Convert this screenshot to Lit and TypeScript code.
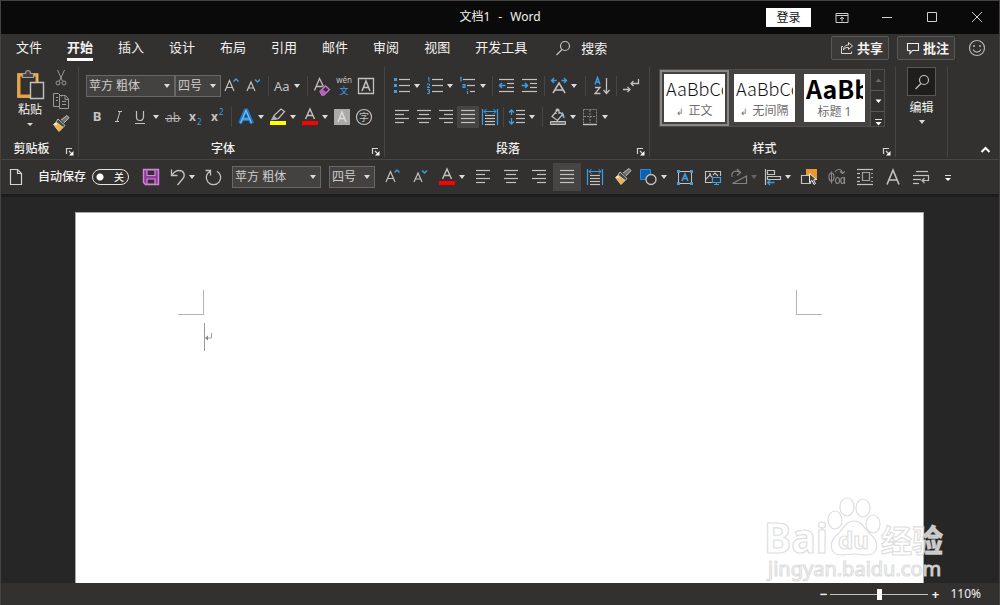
import { LitElement, html, css, svg, nothing, TemplateResult } from "lit";
import { customElement, property } from "lit/decorators.js";
import { classMap } from "lit/directives/class-map.js";

const GREY = "#c4c2c0";
const BLUE = "#3b9fe6";

const rows = (ys: number[], xs: number[][]) =>
  ys.map((y, i) => svg`<path d="M${xs[i % xs.length][0]} ${y + 0.5}H${xs[i % xs.length][1]}" stroke="${GREY}" stroke-width="1.2"/>`);

const brush = svg`
  <path d="M10 6l6-4.5 2 2.2-5 5.2" fill="#77736e" stroke="${GREY}"/>
  <path d="M7 5l7 6.5-2 2L5 8z" fill="#4a4845" stroke="${GREY}"/>
  <path d="M5 8.5L2.5 10.500L8 17.500l4-4z" fill="#f1b24e" stroke="#e9c88d"/>
  <path d="M5 8.500L2.500 10.500l4 .8z" fill="#fff2d8"/>`;
const distribute = svg`
  <path d="M2.500 2v16M17.500 2v16M4 4.500h12" stroke="${BLUE}" stroke-width="1.2"/>
  <path d="M6.500 2L4 4.500 6.500 7M13.500 2L16 4.500 13.500 7" stroke="${BLUE}" fill="none"/>
  ${rows([8, 11, 14, 17], [[5, 15]])}`;
const letterA = (d: string, w = 1.2) => svg`<path d="${d}" fill="none" stroke="${GREY}" stroke-width="${w}"/>`;

/* Glyphs are drawn on a 20 × 20 grid */
const icons: Record<string, TemplateResult | unknown> = {
  cut: svg`<path d="M6.500 2l5 11M13.500 2l-5 11" stroke="#9b9997" fill="none"/><circle cx="7" cy="15" r="2" fill="none" stroke="#9b9997"/><circle cx="13" cy="15" r="2" fill="none" stroke="#9b9997"/>`,
  copy: svg`<path d="M8 15.500H2.500v-13h5l3 3M8.500 4.500h6l3 3.500v9.500h-9zM14 5v3.500h3.500M11 10.500h4M11 13.500h4M5 6.500h2M5 9.500h2" fill="none" stroke="#9b9997"/>`,
  brush,
  grow: svg`${letterA("M3 15L7.500 4.500 12 15M4.500 11.500h6")}<path d="M11.500 5.500l2.500-2.500L16.500 5.500" fill="none" stroke="${BLUE}" stroke-width="1.400"/>`,
  shrink: svg`${letterA("M3 15L7 6 11 15M4.500 12h5")}<path d="M11 3.500l2.500 2.500 2.500-2.500" fill="none" stroke="${BLUE}" stroke-width="1.400"/>`,
  clear: svg`${letterA("M2.500 14.500L7.500 2.500l4 8M4.500 10.500h6", 1.3)}<path d="M8 15.500l5.500-5.500 4 3.500-5.500 5.500H10z" fill="#323130" stroke="#cf78d6" stroke-width="1.300"/><path d="M10.500 13l4 3.500-2.500 2.500h-2L8 15.500z" fill="#b65fc0"/>`,
  phonetic: svg`<text x="10" y="7" font-size="8" text-anchor="middle" fill="${GREY}">wén</text><text x="10" y="18" font-size="9" text-anchor="middle" fill="${BLUE}">文</text>`,
  boxed: svg`<path d="M2.500 2.500h15v15h-15z" fill="none" stroke="${GREY}" stroke-width="1.300"/>${letterA("M6 15L10 5l4 10M7.500 11.500h5", 1.5)}`,
  bold: svg`<text x="10" y="14" font-size="13" font-weight="700" text-anchor="middle" fill="${GREY}">B</text>`,
  italic: svg`<path d="M9 4.500h4M6 14.500h4M11 4.500l-3 10" stroke="${GREY}" fill="none"/>`,
  underline: svg`<path d="M5.500 4v6a3.500 3.500 0 0 0 7 0V4M4 16.500h10" stroke="${GREY}" fill="none" stroke-width="1.200"/>`,
  strike: svg`<text x="10" y="15" font-size="12" text-anchor="middle" fill="#b0aeac">ab</text><path d="M2 11.500h16" stroke="${GREY}"/>`,
  sub: svg`<text x="4" y="14" font-size="12" font-weight="700" fill="${GREY}">x</text><text x="12" y="18" font-size="8" fill="${BLUE}">2</text>`,
  sup: svg`<text x="4" y="14" font-size="12" font-weight="700" fill="${GREY}">x</text><text x="12" y="8" font-size="8" fill="${BLUE}">2</text>`,
  effects: svg`<path d="M4 16.500L9.500 3.500h1L16 16.500M6 12h8" fill="none" stroke="#1f78c8" stroke-width="4"/><path d="M4.500 16L10 3.500 15.500 16M6.500 12h7" fill="none" stroke="#74c0f5" stroke-width="1.200"/>`,
  highlight: svg`<path d="M4 12.500l2-4L13 2l3.500 2.500-6 7-4 1z" fill="none" stroke="${GREY}" stroke-width="1.200"/><path d="M3 13.500l3-5 4 3.500z" fill="#aaa8a6"/><path d="M2 14h16v4H2z" fill="#ffff00"/>`,
  color: svg`${letterA("M5.500 12L10 2l4.500 10M7 8.500h6", 1.4)}<path d="M2 14h16v4H2z" fill="#ff0000"/>`,
  shading: svg`<path d="M2 2h16v16H2z" fill="#acaaa8"/><path d="M6 15L10 5l4 10M7.500 11.500h5" fill="none" stroke="#dedcda" stroke-width="1.400"/>`,
  enclose: svg`<circle cx="10" cy="10" r="7.500" fill="none" stroke="${GREY}" stroke-width="1.200"/><text x="10" y="14" font-size="10" text-anchor="middle" fill="${GREY}">字</text>`,
  bullets: svg`<path d="M2 2h3v3H2zM2 8h3v3H2zM2 14h3v3H2z" fill="${BLUE}"/>${rows([3, 9, 15], [[7, 18]])}`,
  numbers: svg`<path d="M3 2l1-.5v4M2 8h2.500v1.500L2 11.500h3M2 13.500h2.500v4H2M3 15.500h1.500" fill="none" stroke="${BLUE}"/>${rows([3, 9, 15], [[7, 18]])}`,
  multilevel: svg`<path d="M2 2l1-.5v4M4.500 8.500h2.500v3H5v-1.500h2M9.500 13v1M9.500 15v3" fill="none" stroke="${BLUE}" stroke-width="1.200"/>${rows([3, 9, 15], [[5, 17], [9, 17], [12, 17]])}`,
  outdent: svg`${rows([3, 7, 11, 15], [[2, 17], [10, 17], [10, 17], [2, 17]])}<path d="M2.500 9.500h6M5 7L2.500 9.500 5 12" fill="none" stroke="${BLUE}" stroke-width="1.500"/>`,
  indent: svg`${rows([3, 7, 11, 15], [[2, 17], [10, 17], [10, 17], [2, 17]])}<path d="M1.500 9.500h6M5 7l2.500 2.500L5 12" fill="none" stroke="${BLUE}" stroke-width="1.500"/>`,
  layout: svg`${letterA("M4 17L10 7l6 10M6 14h8", 1.5)}<path d="M2.500 4.500h5M5 2L2.500 4.500 5 7M12.500 4.500h5M15 2l2.500 2.500L15 7" fill="none" stroke="${BLUE}" stroke-width="1.300"/>`,
  sort: svg`<path d="M3 8.500l2.500-7 2.500 7M4 6h3.500" fill="none" stroke="${BLUE}" stroke-width="1.400"/><path d="M3 11.500h5l-5 6h5.500M14.500 2v15M11.500 14l3 3.500 3-3.500" fill="none" stroke="${GREY}" stroke-width="1.300"/>`,
  marks: svg`<path d="M17.500 3v4.500H10M12.500 5L10 7.500l2.500 2.500M2 13.500h7M6.500 11L9 13.500 6.500 16" fill="none" stroke="${GREY}" stroke-width="1.300"/>`,
  left: rows([3, 7, 11, 15], [[3, 17], [3, 12]]),
  center: rows([3, 7, 11, 15], [[3, 17], [5, 15]]),
  right: rows([3, 7, 11, 15], [[3, 17], [8, 17]]),
  justify: rows([3, 7, 11, 15], [[3, 17]]),
  distribute,
  spacing: svg`<path d="M4.500 3v5M2 5.500L4.500 3 7 5.500M4.500 11v6M2 14.500L4.500 17 7 14.500" fill="none" stroke="${BLUE}" stroke-width="1.300"/>${rows([3, 7, 11, 15], [[9, 18]])}`,
  bucket: svg`<path d="M4 9.500L9.500 3l5 4.500-5 6zM8 7V3.500c0-2 3-2 3 0V7" fill="none" stroke="${GREY}" stroke-width="1.200"/><path d="M14 5c2 1 2.500 4 2.500 6.500-2-.5-2-3-3-4z" fill="#7cc0f0"/><path d="M2.500 14.500h15v3h-15z" fill="#777573" stroke="${GREY}"/>`,
  borders: svg`<path d="M3.500 2.500h13v14M3.500 2.500v14M10 3v13M4 9.500h12" fill="none" stroke="#8a8886" stroke-dasharray="2 1"/><path d="M3 17.500h14" stroke="${GREY}" stroke-width="1.400"/>`,
  search: svg`<circle cx="12" cy="8" r="4.500" fill="none" stroke="${GREY}" stroke-width="1.200"/><path d="M9 11.500L3.500 17" stroke="${GREY}" stroke-width="1.200"/>`,
  file: svg`<path d="M4.500 2.500h7l4 4v11h-11zM11.500 2.500v4h4" fill="none" stroke="#d6d4d2" stroke-width="1.200"/>`,
  save: svg`<path d="M2.500 2.500h15v15h-13l-2-2z" fill="#8e3b9c" stroke="#d583df" stroke-width="1.400"/><path d="M6 3h8v5.500H6zM6 12h8v5H6z" fill="#323130" stroke="#d583df" stroke-width="1.200"/>`,
  undo: svg`<path d="M4.500 2.500v6h6M5 8c2-3 4-4.500 7-4.500 5 0 6.500 5 4 8L10.500 18" fill="none" stroke="${GREY}" stroke-width="1.300"/>`,
  redo: svg`<path d="M7 4.200A7.200 7.200 0 1 0 14 4.200M2.500 3.500H7.500V8.500" fill="none" stroke="${GREY}" stroke-width="1.300"/>`,
  shapes: svg`<path d="M1.500 2.500h10v10h-10z" fill="#0d61b0" stroke="#2b87d8"/><circle cx="12" cy="12.500" r="5" fill="#323130" stroke="${GREY}" stroke-width="1.300"/>`,
  textbox: svg`<path d="M3.500 4.500h13v12h-13z" fill="none" stroke="${GREY}"/><path d="M2 3h3v3H2zM15 3h3v3h-3zM2 15h3v3H2zM15 15h3v3h-3z" fill="${BLUE}"/><path d="M7 14l3-7 3 7M8 11.500h4" fill="none" stroke="${BLUE}" stroke-width="1.600"/>`,
  picture: svg`<path d="M9 15.500H2.500v-11h15V9M3 12l4-4 3 3M10 8l2-2 3 3" fill="none" stroke="${GREY}" stroke-width="1.100"/><circle cx="7" cy="7" r="1" fill="${GREY}"/><path d="M9.500 10.500h8v5h-8zM13.500 16v2M11 17.500h5" fill="#323130" stroke="${BLUE}" stroke-width="1.200"/>`,
  rotate: svg`<path d="M3.500 16.500h14V9zM3 10c-1-6 4-7 8-4.500M8 2l3.500 3.500L8 8.500" fill="none" stroke="#858381" stroke-width="1.200"/>`,
  alignobj: svg`<path d="M2.500 2v16M4.500 3.500h7v4h-7zM4.500 9.500h13v3h-13z" fill="none" stroke="${GREY}" stroke-width="1.200"/><path d="M4.500 15.500h7M7 13l-2.500 2.500L7 18" fill="none" stroke="${BLUE}" stroke-width="1.300"/>`,
  select: svg`<path d="M7 2h11v11H7z" fill="#e9982d"/><path d="M2.500 8.500h9v8h-9z" fill="#323130" stroke="${GREY}" stroke-width="1.200"/><path d="M10.500 6.500v9l2.500-2 2 4 1.500-1-2-3.500 3-.5z" fill="#45423f" stroke="#eee"/>`,
  convert: svg`<g fill="none" stroke="#8d8b89" stroke-width="1.100"><ellipse cx="4.500" cy="10" rx="2.500" ry="4"/><path d="M4.500 4.500v12M8 5c2.500-4 7-3 7.500 1.500M13 4.500l2.500 2L18 4.500M17.500 10v7"/><ellipse cx="10.500" cy="13.500" rx="2" ry="3"/><ellipse cx="15.500" cy="13.500" rx="1.800" ry="3"/></g>`,
  wrap: svg`${rows([2, 6, 10, 14, 17], [[2, 18], [2, 5], [2, 5], [2, 5], [2, 18]])}<path d="M7.500 5.500h7v8h-7zM16 6.500h2M16 10.500h2M16 14.500h2" fill="none" stroke="#a5a3a1" stroke-width="1.200"/>`,
  bigA: svg`${letterA("M4 17.500L10 3l6 14.500M6 13h8", 1.6)}`,
  lineend: svg`${rows([4, 8, 12, 16], [[5, 17], [2, 18], [2, 10], [2, 8]])}<path d="M17.500 8.500v5H11M13.500 11L11 13.500l2.500 2.500" fill="none" stroke="${GREY}" stroke-width="1.200"/>`,
  ribbon: svg`<path d="M4 5.500h12v9H4zM4 7.500h12M10 13.500V9M8 11l2-2 2 2" fill="none" stroke="#cfcfcf"/>`,
  min: svg`<path d="M5 9.500h10" stroke="#cfcfcf"/>`,
  max: svg`<path d="M5.500 4.500h9v9h-9z" fill="none" stroke="#cfcfcf"/>`,
  close: svg`<path d="M5 4l10 10M15 4L5 14" stroke="#cfcfcf"/>`,
  share: svg`<path d="M6 8.500H4.500v7h10v-2M6.500 12c0-4 3-5 5-5V4.500l4 3.500-4 3.500V9.500c-2 0-4 0-5 2.500z" fill="none" stroke="#dddbd9"/>`,
  comment: svg`<path d="M4.500 5.500h11v7h-6l-2.500 3v-3H4.500z" fill="none" stroke="#f0eeec" stroke-width="1.100"/>`,
  smile: svg`<circle cx="10" cy="10" r="7.500" fill="none" stroke="#b8b6b4" stroke-width="1.200"/><path d="M7 7v2M13 7v2" stroke="#b8b6b4" stroke-width="1.500"/><path d="M6 11.500c2 3.500 6 3.500 8 0" fill="none" stroke="#b8b6b4" stroke-width="1.200"/>`,
  caret: svg`<path d="M7.500 8.500h6l-3 3.500z" fill="#fff"/>`,
  caretUp: svg`<path d="M7.500 12h6l-3-3.500z" fill="#6a6866"/>`,
  more: svg`<path d="M7 7.500h7" stroke="#dddbd9"/><path d="M7.500 10h6l-3 3.500z" fill="#fff"/>`,
  overflow: svg`<path d="M6 8.500h6" stroke="#dddbd9"/><path d="M6 11h6l-3 3z" fill="#fff"/>`,
  collapse: svg`<path d="M6.500 13L10.500 9l4 4" fill="none" stroke="#fff" stroke-width="2"/>`,
  launcher: svg`<path d="M7.500 13V7.500H13M10 10l3.500 3.500" fill="none" stroke="#d6d4d2" stroke-width="1.200"/><path d="M14.500 10v4.500H10z" fill="#fff"/>`,
};

const icon = (name: string) => html`<svg class="icon" viewBox="0 0 20 20" width="20" height="20" aria-hidden="true">${icons[name]}</svg>`;

const shared = css`
  :host { font: 13px/20px "Noto Sans", "Noto Sans CJK SC", sans-serif; color: #f3f2f1; }
  * { box-sizing: border-box; }
  button { font: inherit; color: inherit; background: none; border: 0; padding: 0; margin: 0; }
  .icon { display: block; flex: none; }
`;

@customElement("tool-button")
class ToolButton extends LitElement {
  static styles = [shared, css`
    :host { display: block; flex: none; }
    .tool { display: flex; align-items: center; justify-content: center; width: 22px; height: 22px; }
    .tool.menu { width: 32px; justify-content: flex-start; padding-left: 1px; }
    .tool.large { width: 28px; height: 28px; }
    .tool.large.menu { width: 34px; padding-left: 2px; }
    .tool.pressed { background: #474543; }
    .arrow { display: block; margin-left: 2px; flex: none; }
    .dim { opacity: 0.3; }
  `];
  @property() name = "";
  @property() label = "";
  @property({ type: Boolean }) menu = false;
  @property({ type: Boolean }) large = false;
  @property({ type: Boolean }) pressed = false;
  @property({ type: Boolean }) off = false;
  render() {
    return html`<button class=${classMap({ tool: true, menu: this.menu, large: this.large, pressed: this.pressed })} aria-label=${this.label || this.name}>
      ${icon(this.name)}
      ${this.menu ? html`<svg class=${classMap({ arrow: true, dim: this.off })} width="6" height="4"><path d="M0 0h6L3 4z" fill="#dddbd9"/></svg>` : nothing}
    </button>`;
  }
}

@customElement("combo-box")
class ComboBox extends LitElement {
  static styles = [shared, css`
    :host { display: block; flex: none; }
    .combo { display: grid; align-items: center; height: 22px; width: 89px; background: #444240; border: 1px solid #6a6866; }
    .combo.short { width: 46px; }
    select { grid-area: 1 / 1; width: 100%; height: 20px; appearance: none; border: 0; border-radius: 0; background: none; color: #d0cecc; font: inherit; font-size: 12px; padding: 0 0 0 2px; outline: 0; }
    .arrow { grid-area: 1 / 1; justify-self: end; margin-right: 4px; pointer-events: none; }
  `];
  @property() value = "";
  @property() label = "";
  @property({ type: Boolean }) short = false;
  render() {
    return html`<div class=${classMap({ combo: true, short: this.short })}>
      <select aria-label=${this.label}><option>${this.value}</option></select>
      <svg class="arrow" width="6" height="4"><path d="M0 0h6L3 4z" fill="#dddbd9"/></svg>
    </div>`;
  }
}

const tool = (name: string, label: string, menu = false, pressed = false) =>
  html`<tool-button name=${name} label=${label} ?menu=${menu} ?pressed=${pressed}></tool-button>`;
const quick = (name: string, label: string, menu = false, pressed = false, off = false) =>
  html`<tool-button large name=${name} label=${label} ?menu=${menu} ?pressed=${pressed} ?off=${off}></tool-button>`;

@customElement("app-root")
class AppRoot extends LitElement {
  static styles = [shared, css`
    :host { display: flex; flex-direction: column; min-height: 100vh; background: #262626; border: 1px solid #444342; border-bottom: 0; box-sizing: border-box; overflow: hidden; position: relative; }
    .titlebar { display: grid; grid-template-columns: 1fr auto 1fr; align-items: center; height: 33px; background: #0a0a0a; }
    .title { grid-column: 2; display: flex; gap: 8px; font-size: 12px; height: 22px; }
    .window { display: flex; justify-content: flex-end; align-items: center; }
    .window button { width: 45px; display: flex; justify-content: center; }
    .window .login { background: #fff; color: #111; font-size: 12px; line-height: 19px; margin-right: 8px; }
    .ribbon { background: #323130; border-bottom: 3px solid #1e1e1e; }
    .tabs { display: flex; align-items: center; height: 31px; padding: 0 12px 3px 15px; }
    nav { display: flex; gap: 25px; }
    .tab { color: inherit; text-decoration: none; height: 26px; line-height: 24px; white-space: nowrap; }
    .tab.active { font-weight: 700; border-bottom: 3px solid #fff; }
    .search { display: flex; align-items: center; gap: 8px; margin-left: 26px; flex: 1; }
    .search input { width: 80px; background: none; border: 0; padding: 0; font: inherit; color: inherit; outline: 0; }
    .search input::placeholder { color: #f3f2f1; opacity: 1; }
    .actions { display: flex; align-items: center; gap: 8px; }
    .action { display: flex; align-items: center; justify-content: center; width: 58px; height: 24px; background: #3b3a39; border: 1px solid #5a5856; border-radius: 2px; font-weight: 700; }
    .feedback { margin-left: 4px; }
    .groups { display: flex; height: 95px; padding-top: 2px; border-bottom: 1px solid #484644; }
    .group { display: flex; flex-direction: column; flex: none; height: 90px; border-right: 1px solid #484644; }
    .clipboard { width: 78px; }
    .font { width: 306px; padding-left: 7px; }
    .paragraph { width: 265px; padding-left: 6px; }
    .styles { width: 246px; padding-left: 9px; }
    .edit { width: 52px; }
    .content { flex: 1; display: flex; flex-direction: column; gap: 9px; padding-top: 8px; }
    .content.top { padding-top: 2px; }
    .row { display: flex; align-items: center; height: 22px; }
    .row.loose { gap: 1px; }
    .sep { width: 1px; height: 20px; background: #484644; margin: 0 3px; }
    .loose .sep, .sep.slim { margin: 0 2px; }
    .loose .sep.wide, .sep.wide { margin: 0 4px; }
    .caption { display: flex; align-items: center; height: 16px; font-size: 12px; line-height: 16px; font-weight: 500; }
    .caption span { flex: 1; text-align: center; }
    .font .caption span { padding-right: 8px; }
    .styles .caption span { padding-right: 9px; }
    .paragraph .caption span { padding-right: 8px; }
    .caption button { display: block; height: 16px; width: 16px; }
    .caption .icon { margin-left: -3px; }
    .case { display: flex; align-items: center; gap: 4px; width: 32px; height: 22px; padding-left: 2px; font-size: 13px; color: #c4c2c0; }
    .clip { flex: 1; display: flex; padding-left: 14px; gap: 5px; }
    .paste { display: flex; flex-direction: column; align-items: center; gap: 1px; width: 30px; font-size: 12px; line-height: 16px; padding-top: 2px; }
    .clip-tools { display: flex; flex-direction: column; }
    .clip-tools tool-button { height: 23px; }
    .gallery { display: flex; width: 226px; height: 58px; background: #444342; border: 1px solid #504e4c; }
    .cards { flex: 1; display: flex; gap: 1px; }
    .style { width: 69px; height: 56px; border: 2px solid transparent; padding: 2px; }
    .style.selected { border-color: #8a8886; }
    .card { display: flex; flex-direction: column; align-items: center; height: 48px; background: #fff; overflow: hidden; }
    .sample { width: 57px; height: 28px; overflow: hidden; white-space: nowrap; text-align: left; font: 300 18px/28px "Noto Sans CJK SC", sans-serif; color: #111; }
    .sample.heading { font-size: 25px; font-weight: 700; color: #000; }
    .name { font-size: 12px; line-height: 20px; color: #6f6d6b; white-space: nowrap; }
    .return { font-size: 9px; margin-right: 4px; }
    .scroll { display: flex; flex-direction: column; width: 14px; border-left: 1px solid #5a5856; background: #323130; }
    .scroll button { flex: 1; display: flex; align-items: center; justify-content: center; border-bottom: 1px solid #5a5856; }
    .scroll button:last-child { border-bottom: 0; }
    .find { display: flex; flex-direction: column; align-items: center; gap: 2px; font-size: 12px; line-height: 20px; }
    .find-box { display: flex; align-items: center; justify-content: center; width: 29px; height: 29px; background: #1f1e1d; border: 1px solid #5a5856; }
    .collapse { margin-left: auto; align-self: flex-end; padding: 0 4px 0 0; }
    .quickbar { display: flex; align-items: center; height: 34px; padding-left: 1px; }
    .autosave { display: flex; align-items: center; gap: 6px; margin: 0 8px; font-size: 12px; font-weight: 500; }
    .switch { display: grid; align-items: center; width: 37px; height: 16px; }
    .switch input { grid-area: 1 / 1; appearance: none; width: 37px; height: 16px; margin: 0; border: 1px solid #e6e4e2; border-radius: 8px; background: radial-gradient(circle at 7px 7px, #fff 3px, transparent 4px); }
    .switch span { grid-area: 1 / 1; justify-self: end; margin-right: 5px; font-size: 10px; line-height: 14px; pointer-events: none; }
    .fonts { display: flex; gap: 8px; margin: 0 4px 0 5px; }
    .workspace { flex: 1; display: flex; padding: 15px 75px 0 74px; }
    .page { flex: 1; display: flex; flex-direction: column; background: #fff; border: 1px solid #a8a6a4; border-bottom: 0; padding: 77px 101px 0 102px; }
    .corners { display: flex; justify-content: space-between; }
    .corner { width: 26px; height: 25px; border: 0 solid #b4b4b4; border-width: 0 1px 1px 0; }
    .corner.end { border-width: 0 0 1px 1px; }
    .text { display: flex; align-items: center; margin: 8px 0 0 26px; height: 28px; border-left: 1px solid #999; outline: 0; }
    .status { display: flex; align-items: center; justify-content: flex-end; gap: 3px; height: 22px; padding-right: 18px; background: #323130; font-size: 12px; }
    .status button { width: 8px; font-weight: 700; line-height: 20px; font-size: 13px; }
    .status input { appearance: none; width: 98px; height: 12px; margin: 0; background: linear-gradient(#c4c2c0, #c4c2c0) center / 100% 1px no-repeat; }
    .status input::-webkit-slider-thumb { appearance: none; width: 5px; height: 11px; background: #fff; }
    .status output { margin-left: 8px; }
    .mark { position: absolute; right: 49px; bottom: 20px; pointer-events: none; }
    .mark text { font-family: "Noto Sans", "Noto Sans CJK SC", sans-serif; }
  `];

  private card(mark: boolean, name: string, selected = false, heading = false) {
    return html`<button class=${classMap({ style: true, selected })}>
      <span class="card"><span class=${classMap({ sample: true, heading })}>AaBbCc</span><span class="name">${mark ? html`<span class="return">↲</span>` : nothing}${name}</span></span>
    </button>`;
  }

  private caption(text: string) {
    return html`<div class="caption"><span>${text}</span><button aria-label=${text + "设置"}>${icon("launcher")}</button></div>`;
  }

  render() {
    const tabs = ["文件", "开始", "插入", "设计", "布局", "引用", "邮件", "审阅", "视图", "开发工具"];
    const sep = html`<span class="sep"></span>`;
    const wide = html`<span class="sep wide"></span>`;
    return html`
      <header class="titlebar">
        <div class="title"><span>文档1</span><span>-</span><span>Word</span></div>
        <div class="window">
          <button class="login">登录</button>
          ${[["ribbon", "功能区显示选项"], ["min", "最小化"], ["max", "最大化"], ["close", "关闭"]].map(([n, l]) => html`<button aria-label=${l}>${icon(n)}</button>`)}
        </div>
      </header>
      <section class="ribbon">
        <div class="tabs">
          <nav>${tabs.map((t) => html`<a href="#" class=${classMap({ tab: true, active: t === "开始" })}>${t}</a>`)}</nav>
          <label class="search">${icon("search")}<input type="text" aria-label="搜索" placeholder="搜索" /></label>
          <div class="actions">
            <button class="action">${icon("share")}共享</button>
            <button class="action">${icon("comment")}批注</button>
            <button class="feedback" aria-label="反馈">${icon("smile")}</button>
          </div>
        </div>
        <div class="groups">
          <div class="group clipboard">
            <div class="clip">
              <button class="paste">
                <svg width="30" height="32" viewBox="0 0 30 32" aria-hidden="true">
                  <path d="M4 6h18v21H4z" fill="#323130" stroke="#eca13a" stroke-width="3"/>
                  <path d="M2.500 4.500h20v24h-20z" fill="none" stroke="#f5cf8f" stroke-width="0.600"/>
                  <path d="M7.500 8.500v-4h3c0-4 5-4 5 0h3v4z" fill="#45423f" stroke="#a5a3a1" stroke-width="1.200"/>
                  <path d="M15.500 13.500h13v16h-13z" fill="#323130" stroke="#c4c2c0" stroke-width="1.400"/>
                </svg>
                粘贴
                <svg width="6" height="10"><path d="M0 4h6L3 7z" fill="#dddbd9"/></svg>
              </button>
              <div class="clip-tools">${tool("cut", "剪切")}${tool("copy", "复制")}${tool("brush", "格式刷")}</div>
            </div>
            ${this.caption("剪贴板")}
          </div>
          <div class="group font">
            <div class="content">
              <div class="row">
                <combo-box value="苹方 粗体" label="字体"></combo-box><combo-box short value="四号" label="字号"></combo-box>
                ${tool("grow", "增大字号")}${tool("shrink", "减小字号")}${sep}
                <button class="case" aria-label="更改大小写">Aa<svg width="6" height="4"><path d="M0 0h6L3 4z" fill="#dddbd9"/></svg></button>
                ${sep}${tool("clear", "清除格式")}${tool("phonetic", "拼音指南")}${tool("boxed", "字符边框")}
              </div>
              <div class="row">
                ${tool("bold", "加粗")}${tool("italic", "倾斜")}${tool("underline", "下划线", true)}${tool("strike", "删除线")}${tool("sub", "下标")}${tool("sup", "上标")}
                ${sep}${tool("effects", "文本效果", true)}${tool("highlight", "突出显示", true)}${tool("color", "字体颜色", true)}${tool("shading", "字符底纹")}${tool("enclose", "带圈字符")}
              </div>
            </div>
            ${this.caption("字体")}
          </div>
          <div class="group paragraph">
            <div class="content">
              <div class="row loose">
                ${tool("bullets", "项目符号", true)}${tool("numbers", "编号", true)}${tool("multilevel", "多级列表", true)}${sep}
                ${tool("outdent", "减少缩进")}${tool("indent", "增加缩进")}${sep}${tool("layout", "中文版式", true)}${wide}${tool("sort", "排序")}${sep}${tool("marks", "显示编辑标记")}
              </div>
              <div class="row">
                ${tool("left", "左对齐")}${tool("center", "居中")}${tool("right", "右对齐")}${tool("justify", "两端对齐", false, true)}${tool("distribute", "分散对齐")}
                <span class="sep slim"></span>${tool("spacing", "行距", true)}${wide}${tool("bucket", "底纹", true)}${tool("borders", "边框", true)}
              </div>
            </div>
            ${this.caption("段落")}
          </div>
          <div class="group styles">
            <div class="content top">
              <div class="gallery">
                <div class="cards">${this.card(true, "正文", true)}${this.card(true, "无间隔")}${this.card(false, "标题 1", false, true)}</div>
                <div class="scroll"><button aria-label="上一行">${icon("caretUp")}</button><button aria-label="下一行">${icon("caret")}</button><button aria-label="其他">${icon("more")}</button></div>
              </div>
            </div>
            ${this.caption("样式")}
          </div>
          <div class="group edit">
            <button class="find"><span class="find-box">${icon("search")}</span>编辑<svg width="6" height="4"><path d="M0 0h6L3 4z" fill="#dddbd9"/></svg></button>
          </div>
          <button class="collapse" aria-label="折叠功能区">${icon("collapse")}</button>
        </div>
        <div class="quickbar">
          ${quick("file", "新建")}
          <label class="autosave">自动保存<span class="switch"><input type="checkbox" role="switch" /><span>关</span></span></label>
          ${quick("save", "保存")}${quick("undo", "撤消", true)}${quick("redo", "重复")}
          <div class="fonts"><combo-box value="苹方 粗体" label="字体"></combo-box><combo-box short value="四号" label="字号"></combo-box></div>
          ${quick("grow", "增大字号")}${quick("shrink", "减小字号")}${quick("color", "字体颜色", true)}${quick("left", "左对齐")}${quick("center", "居中")}${quick("right", "右对齐")}${quick("justify", "两端对齐", false, true)}${quick("distribute", "分散对齐")}${quick("brush", "格式刷")}${quick("shapes", "形状", true)}${quick("textbox", "文本框")}${quick("picture", "图片")}${quick("rotate", "旋转", true, false, true)}${quick("alignobj", "对齐", true)}${quick("select", "选择对象")}${quick("convert", "转换")}${quick("wrap", "环绕文字")}${quick("bigA", "字体")}${quick("lineend", "换行")}${quick("overflow", "自定义")}
        </div>
      </section>
      <main class="workspace">
        <article class="page">
          <div class="corners"><span class="corner"></span><span class="corner end"></span></div>
          <div class="text" contenteditable="true" role="textbox" aria-label="文档正文"><svg width="8" height="10" contenteditable="false"><path d="M6.500 1v5H2" fill="none" stroke="#a0a0a0"/><path d="M0 6l3-2.500v5z" fill="#888"/></svg></div>
        </article>
      </main>
      <footer class="status">
        <button aria-label="缩小">−</button><input type="range" aria-label="显示比例" min="10" max="210" value="110" /><button aria-label="放大">+</button><output>110%</output>
      </footer>
      <svg class="mark" width="184" height="90" viewBox="0 0 184 90" aria-hidden="true">
        <g fill="#ffffff" fill-opacity="0.750" stroke="#d6d6d6" stroke-opacity="0.800" stroke-width="1.200">
          <ellipse cx="69" cy="25" rx="7" ry="9"/><ellipse cx="81" cy="12" rx="7" ry="9"/><ellipse cx="97" cy="13" rx="7" ry="9"/><ellipse cx="107" cy="29" rx="7" ry="9"/>
          <path d="M88 26c8 0 10 7 15 12 12 9 9 22-2 22-6 0-8-1-13-1s-8 1-13 1c-11 0-14-13-2-22 5-5 7-12 15-12z"/>
          <text x="-2" y="58" font-size="41" font-weight="700">Bai</text>
          <text x="72" y="54" font-size="24" font-weight="700">du</text>
          <text x="115" y="57" font-size="31" font-weight="700">经验</text>
          <text x="2" y="81" font-size="20">jingyan.baidu.com</text>
        </g>
      </svg>
    `;
  }
}
